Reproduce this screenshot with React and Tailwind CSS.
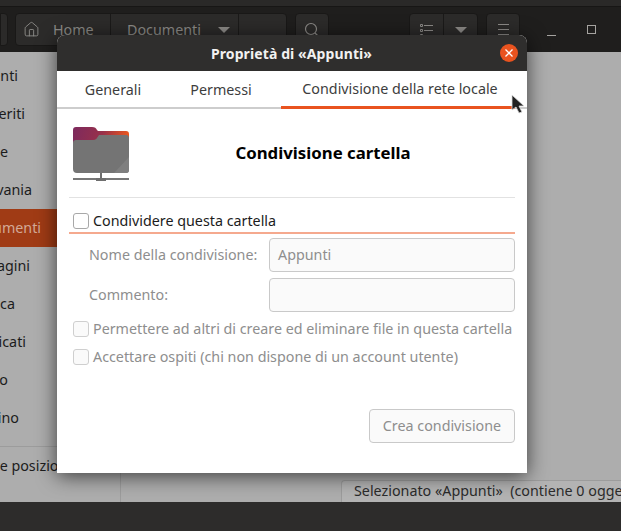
import React from "react";
import { Home } from "lucide-react";

// full names, the sidebar is cut by the window edge so each row ends at its own x
const places = [
  { name: "Recenti", end: "w-[18px]" },
  { name: "Preferiti", end: "w-[25px]" },
  { name: "Home", end: "w-[8px]" },
  { name: "Scrivania", end: "w-[32px]" },
  { name: "Documenti", end: "w-[41px]", active: true },
  { name: "Immagini", end: "w-[30px]" },
  { name: "Musica", end: "w-[15px]" },
  { name: "Scaricati", end: "w-[26px]" },
  { name: "Video", end: "w-[8px]" },
  { name: "Cestino", end: "w-[19px]" },
];

const Checkbox = ({ muted }) => (
  <span
    className={`w-4 h-4 rounded-[3px] border shrink-0 ${
      muted ? "border-[#cfcfcf] bg-[#fafafa]" : "border-[#a8a8a8] bg-white"
    }`}
  ></span>
);

const FolderIcon = () => (
  <svg width="58" height="56" viewBox="0 0 58 56" className="shrink-0">
    <defs>
      <linearGradient id="back" x1="0" y1="0" x2="1" y2="0.15">
        <stop offset="0" stopColor="#7d2a5e" />
        <stop offset="0.55" stopColor="#98304a" />
        <stop offset="1" stopColor="#e9561f" />
      </linearGradient>
    </defs>
    <path d="M0 3a3 3 0 0 1 3-3h16c3 0 4 1 5 3l1 1h28a3 3 0 0 1 3 3v20H0z" fill="url(#back)" />
    <path d="M0 16a3 3 0 0 1 3-3h17c3 0 4-2 6-5h27a3 3 0 0 1 3 3v32a3 3 0 0 1-3 3H4a4 4 0 0 1-4-4z" fill="#747474" />
    <path d="M56 30v13a3 3 0 0 1-3 3H41z" fill="#7f7f7f" />
    <rect x="27" y="46" width="2" height="5" fill="#6e6e6e" />
    <rect x="0" y="51" width="56" height="2" fill="#777777" />
    <rect x="23" y="51" width="10" height="3" fill="#6e6e6e" />
  </svg>
);

const HeaderBar = () => (
  <div className="h-[52px] bg-[#1f1e1d]">
    <div className="h-[7px] bg-[#2a2928] border-b border-[#171615]"></div>
    <div className="flex items-center h-[33px] mt-[6px] text-[#8d8b88] text-[14.3px]">
      <div className="w-[8px] h-full bg-[#2b2a29] rounded-r-[4px] border border-[#191817]"></div>
      <div className="ml-[7px] w-[272px] h-full flex bg-[#2c2b2a] rounded-[4px] border border-[#191817]">
        <div className="w-[95px] flex items-center gap-[13px] pl-[7px] border-r border-[#1b1a19]">
          <Home size={17} strokeWidth={1.3} className="text-[#8d8b88]" />
          <span>Home</span>
        </div>
        <div className="w-[128px] flex items-center pl-[16px] gap-[17px] border-r border-[#1b1a19]">
          <span>Documenti</span>
          <span className="w-0 h-0 border-x-[6px] border-x-transparent border-t-[6px] border-t-[#8d8b88]"></span>
        </div>
      </div>
      <div className="ml-[8px] w-[34px] h-full bg-[#2c2b2a] rounded-[4px] border border-[#191817] flex items-center justify-center">
        <svg width="16" height="16" viewBox="0 0 16 16" fill="none" stroke="#8d8b88" strokeWidth="1.2">
          <circle cx="7" cy="7" r="5.5" />
          <path d="M11 11l4 4" />
        </svg>
      </div>
      <div className="ml-[80px] w-[69px] h-full flex bg-[#2c2b2a] rounded-[4px] border border-[#191817]">
        <div className="w-[34px] border-r border-[#1b1a19] flex items-center justify-center">
          <svg width="13" height="14" viewBox="0 0 13 14" stroke="#8d8b88" fill="none">
            <path d="M4 2.5h9M4 7.5h9M4 12.5h9" />
            <path d="M.5 1.5h2v2h-2zM.5 6.5h2v2h-2zM.5 11.5h2v2h-2z" />
          </svg>
        </div>
        <div className="flex-1 flex items-center justify-center">
          <span className="w-0 h-0 border-x-[6px] border-x-transparent border-t-[6px] border-t-[#8d8b88]"></span>
        </div>
      </div>
      <div className="ml-[8px] w-[34px] h-full bg-[#2c2b2a] rounded-[4px] border border-[#191817] flex flex-col gap-[4px] items-center justify-center">
        <span className="w-[11px] h-[1px] bg-[#8d8b88]"></span>
        <span className="w-[11px] h-[1px] bg-[#8d8b88]"></span>
        <span className="w-[11px] h-[1px] bg-[#8d8b88]"></span>
      </div>
      <div className="ml-[27px] w-[9px] h-[1px] bg-[#a5a3a0] mt-[12px]"></div>
      <div className="ml-[31px] w-[9px] h-[9px] border border-[#a5a3a0]"></div>
    </div>
  </div>
);

const Background = () => (
  <div className="w-full h-[531px] flex flex-col bg-[#2d2c2b] overflow-hidden">
    <HeaderBar />
    <div className="h-[450px] flex bg-[#adadad]">
      <div className="w-[121px] border-r border-[#9c9c9c] text-[14.3px] text-[#1c1c1c] overflow-hidden">
        <div className="pt-[5px]">
          {places.map((p) => (
            <div
              key={p.name}
              className={`h-[38px] flex items-center whitespace-nowrap ${
                p.active ? "bg-[#a03b15] text-[#d3a997]" : ""
              }`}
            >
              <div className={`${p.end} flex justify-end`}>
                <span className="shrink-0">{p.name}</span>
              </div>
            </div>
          ))}
        </div>
        <div className="mt-[9px] border-t border-[#9c9c9c] h-[38px] flex items-center whitespace-nowrap">
          <div className="w-[71px] flex justify-end">
            <span className="shrink-0">Altre posizioni</span>
          </div>
        </div>
      </div>
      <div className="flex-1 flex flex-col justify-end items-end overflow-hidden">
        <div className="w-[280px] h-[22px] ml-auto bg-[#b3b3b3] border-l border-t border-[#9c9c9c] rounded-tl-[4px] pl-[12px] text-[14.3px] text-[#2b2b2b] whitespace-nowrap leading-[20px]">
          Selezionato «Appunti»&nbsp; (contiene 0 oggetti)
        </div>
      </div>
    </div>
  </div>
);

const Dialog = () => (
  <div className="absolute left-[57px] top-[35px] w-[470px] h-[438px] rounded-t-[8px] bg-white shadow-[0_3px_20px_rgba(0,0,0,0.65)] flex flex-col overflow-hidden text-[14.3px]">
    {/* Titlebar */}
    <div className="h-[36px] shrink-0 bg-[#2f2e2d] flex items-center justify-center relative">
      <span className="text-[14px] font-bold tracking-[0.1px] text-[#f2f1f0] -ml-[1px]">Proprietà di «Appunti»</span>
      <span className="absolute right-[9px] top-[9px] w-[18px] h-[18px] rounded-full bg-[#e9531f] flex items-center justify-center">
        <svg width="10" height="10" viewBox="0 0 10 10">
          <path d="M1.5 1.5l7 7M8.5 1.5l-7 7" stroke="#fff" strokeWidth="1.3" />
        </svg>
      </span>
    </div>

    {/* Tabs */}
    <div className="h-[38px] shrink-0 flex border-b-2 border-[#cdcdcd] text-[#3d3d3d]">
      <div className="w-[112px] pt-[1px] flex items-center justify-center">Generali</div>
      <div className="w-[112px] pt-[1px] pr-[8px] flex items-center justify-center">Permessi</div>
      <div className="w-[234px] pt-[1px] pl-[4px] flex items-center justify-center border-b-[3px] -mb-[2px] border-[#e9531f]">
        Condivisione della rete locale
      </div>
    </div>

    {/* Body */}
    <div className="flex-1 flex flex-col px-[12px]">
      <div className="h-[89px] shrink-0 flex items-center border-b border-[#e2e2e2] pl-[4px]">
        <div className="mt-[4px]">
          <FolderIcon />
        </div>
        <div className="flex-1 text-center text-[16.8px] font-bold text-black">Condivisione cartella</div>
      </div>

      <div className="mt-[14px] pl-[4px] flex items-center gap-[4px] text-[#1c1c1c] h-[18px]">
        <Checkbox />
        <span className="pb-[1px]">Condividere questa cartella</span>
      </div>
      <div className="mt-[2px] h-[2px] bg-[#f5a98e]"></div>

      <div className="mt-[4px] flex items-center text-[#8e8e8e]">
        <span className="w-[200px] pl-[20px] pb-[1px]">Nome della condivisione:</span>
        <div className="flex-1 h-[34px] rounded-[4px] border border-[#c9c9c9] bg-[#fafafa] flex items-center pl-[8px] pb-[1px]">
          Appunti
        </div>
      </div>
      <div className="mt-[6px] flex items-center text-[#8e8e8e]">
        <span className="w-[200px] pl-[20px] pb-[1px]">Commento:</span>
        <div className="flex-1 h-[34px] rounded-[4px] border border-[#c9c9c9] bg-[#fafafa]"></div>
      </div>

      <div className="mt-[9px] pl-[4px] h-[16px] flex items-center gap-[4px] text-[#8e8e8e] whitespace-nowrap">
        <Checkbox muted />
        <span>Permettere ad altri di creare ed eliminare file in questa cartella</span>
      </div>
      <div className="mt-[12px] pl-[4px] h-[16px] flex items-center gap-[4px] text-[#8e8e8e] whitespace-nowrap">
        <Checkbox muted />
        <span>Accettare ospiti (chi non dispone di un account utente)</span>
      </div>

      <div className="mt-[44px] flex justify-end">
        <div className="w-[146px] h-[34px] rounded-[4px] border border-[#c9c9c9] bg-[#fafafa] text-[#8e8e8e] flex items-center justify-center pb-[1px]">
          Crea condivisione
        </div>
      </div>
    </div>
  </div>
);

export default function App() {
  return (
    <div className="relative w-[621px] h-[531px] overflow-hidden font-['Noto_Sans',sans-serif]">
      <Background />
      <Dialog />
      {/* mouse cursor */}
      <svg width="16" height="22" viewBox="0 0 16 22" className="absolute left-[511px] top-[94px]">
        <path d="M1 1v15l4-3 3 6 3-1-3-6h5z" fill="#222" stroke="#ddd" strokeWidth="0.8" />
      </svg>
    </div>
  );
}
